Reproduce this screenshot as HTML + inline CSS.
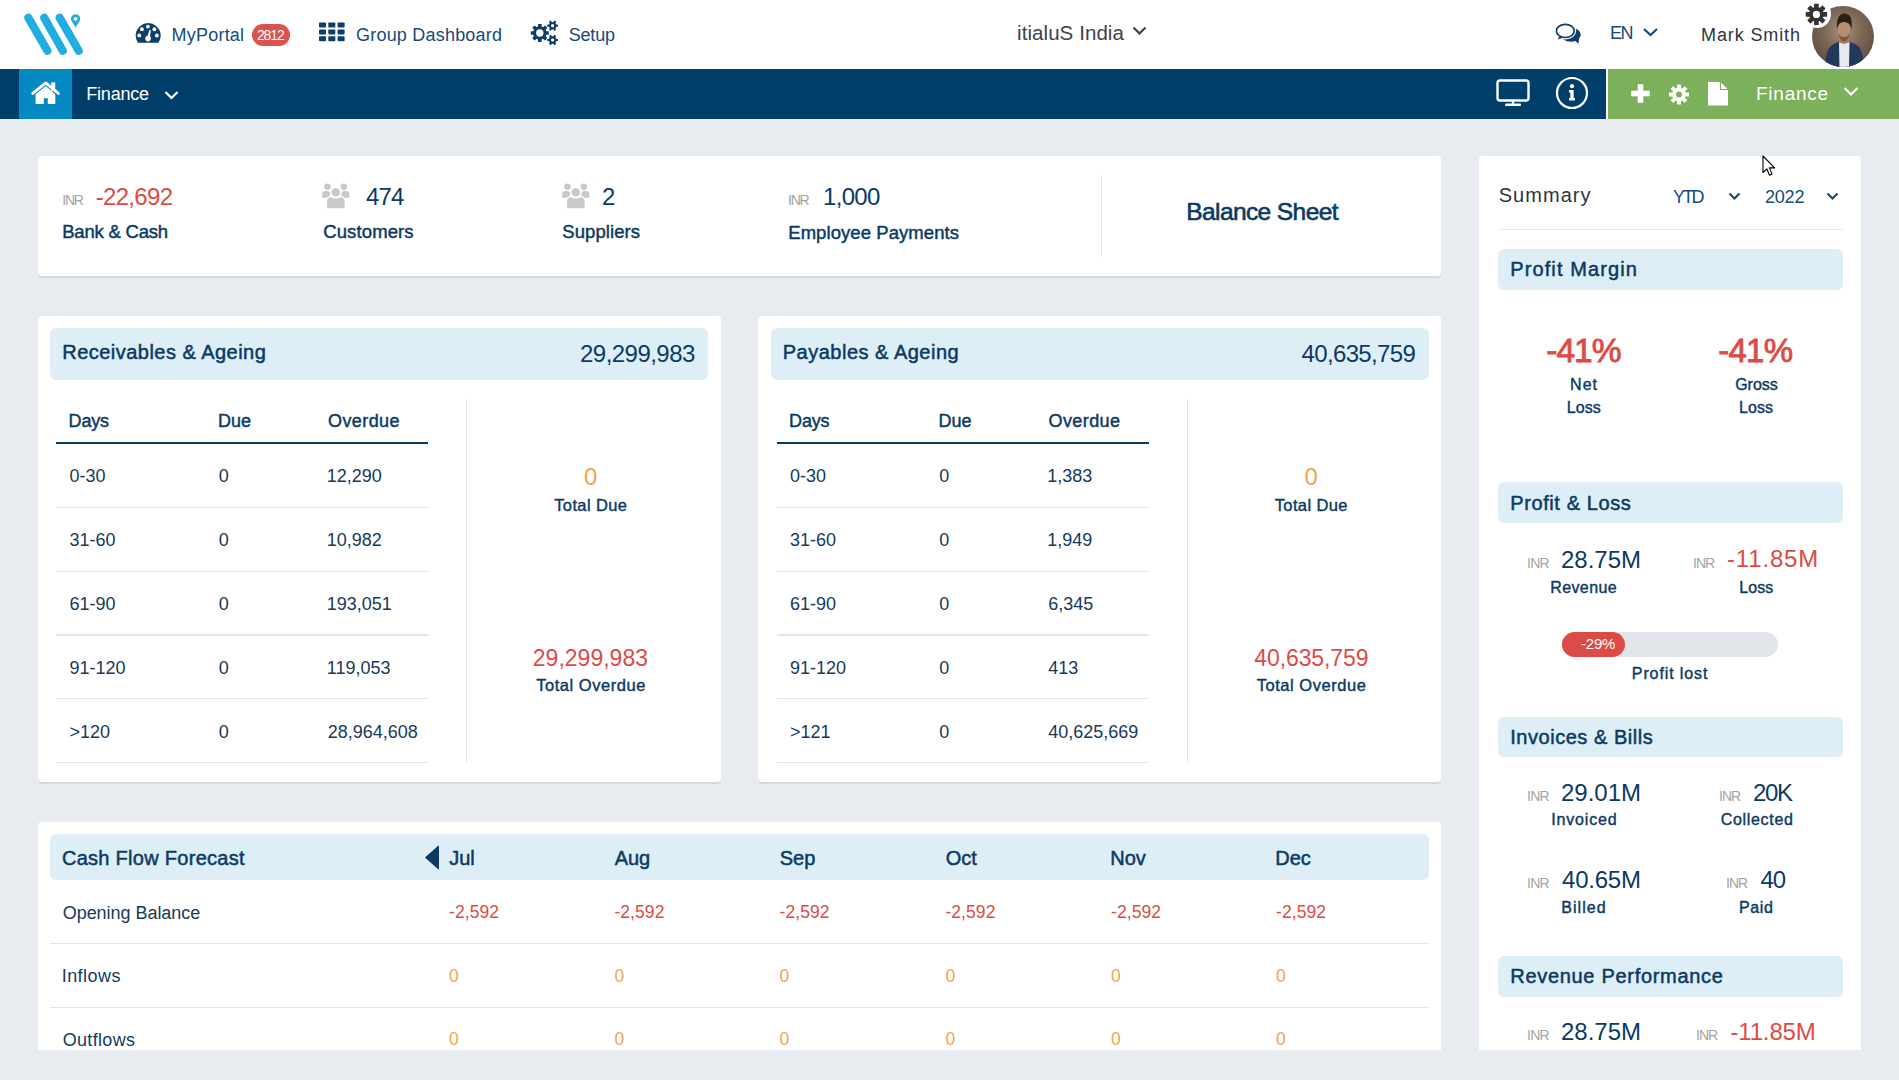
<!DOCTYPE html>
<html><head><meta charset="utf-8"><style>
html,body{margin:0;padding:0;width:1899px;height:1080px;overflow:hidden;background:#e8ebef;font-family:"Liberation Sans", sans-serif;}
.a{position:absolute;}
</style></head><body>
<!-- header -->
<div class="a" style="left:0;top:0;width:1899px;height:69px;background:#fff"></div>
<!-- logo -->
<svg class="a" style="left:20px;top:8px" width="70" height="50" viewBox="0 0 70 50">
  <g stroke="#22ade0" stroke-width="8.2" stroke-linecap="round">
    <line x1="8.4" y1="9.9" x2="27.4" y2="42.8"/>
    <line x1="24.3" y1="9.9" x2="42.8" y2="42.8"/>
    <line x1="39.7" y1="9.9" x2="58.7" y2="42.8"/>
  </g>
  <path d="M55.6 19.6 L51.56 13 A4.6 4.6 0 1 1 59.64 13 Z" fill="#22ade0"/>
  <circle cx="55.6" cy="10.8" r="1.9" fill="#fff"/>
</svg>
<!-- gauge icon -->
<svg class="a" style="left:135px;top:22px" width="27" height="22" viewBox="0 0 27 22">
  <path d="M2.9 20.7 A12.5 12.5 0 1 1 23.5 20.7 Z" fill="#0e3f6a"/>
  <g fill="#fff">
    <circle cx="12.9" cy="4.6" r="1.9"/><circle cx="6.9" cy="7.25" r="1.9"/><circle cx="19.4" cy="7.25" r="1.9"/>
    <circle cx="4.2" cy="13.5" r="1.9"/><circle cx="21.9" cy="13.5" r="1.9"/>
    <circle cx="13.05" cy="16.6" r="2.8"/>
    <path d="M11.8 16.3 L14.4 7.9 L15.9 8.2 L14.6 16.8 Z"/>
  </g>
</svg>
<!-- badge -->
<div class="a" style="left:252px;top:24px;width:38px;height:22px;border-radius:11px;background:#d9534f"></div>
<!-- grid icon -->
<svg class="a" style="left:319px;top:22px" width="26" height="20" viewBox="0 0 26 20">
  <g fill="#0e3f6a">
    <rect x="0" y="0.5" width="7" height="5" rx="0.8"/><rect x="9.3" y="0.5" width="7" height="5" rx="0.8"/><rect x="18.6" y="0.5" width="7" height="5" rx="0.8"/>
    <rect x="0" y="7.4" width="7" height="5" rx="0.8"/><rect x="9.3" y="7.4" width="7" height="5" rx="0.8"/><rect x="18.6" y="7.4" width="7" height="5" rx="0.8"/>
    <rect x="0" y="14.3" width="7" height="5" rx="0.8"/><rect x="9.3" y="14.3" width="7" height="5" rx="0.8"/><rect x="18.6" y="14.3" width="7" height="5" rx="0.8"/>
  </g>
</svg>
<!-- cogs icon -->
<svg class="a" style="left:530px;top:20px" width="28" height="28" viewBox="0 0 28 28">
  <g fill="#0e3f6a">
    <g transform="translate(9.8 13)">
      <circle r="6.8"/>
      <rect x="-1.8" y="-9" width="3.6" height="18" rx="0.5"/>
      <rect x="-1.8" y="-9" width="3.6" height="18" rx="0.5" transform="rotate(45)"/>
      <rect x="-1.8" y="-9" width="3.6" height="18" rx="0.5" transform="rotate(90)"/>
      <rect x="-1.8" y="-9" width="3.6" height="18" rx="0.5" transform="rotate(135)"/>
    </g>
    <g transform="translate(22.6 5.7)">
      <circle r="3.7"/>
      <rect x="-1.1" y="-5.4" width="2.2" height="10.8" rx="0.4" transform="rotate(90)"/>
      <rect x="-1.1" y="-5.4" width="2.2" height="10.8" rx="0.4" transform="rotate(30)"/>
      <rect x="-1.1" y="-5.4" width="2.2" height="10.8" rx="0.4" transform="rotate(150)"/>
    </g>
    <g transform="translate(22.6 20)">
      <circle r="3.7"/>
      <rect x="-1.1" y="-5.4" width="2.2" height="10.8" rx="0.4" transform="rotate(90)"/>
      <rect x="-1.1" y="-5.4" width="2.2" height="10.8" rx="0.4" transform="rotate(30)"/>
      <rect x="-1.1" y="-5.4" width="2.2" height="10.8" rx="0.4" transform="rotate(150)"/>
    </g>
  </g>
  <circle cx="9.8" cy="13" r="3.7" fill="#fff"/>
  <circle cx="22.6" cy="5.7" r="1.6" fill="#fff"/>
  <circle cx="22.6" cy="20" r="1.6" fill="#fff"/>
</svg>
<!-- company chevron -->
<svg class="a" style="left:1131px;top:25px" width="17" height="12" viewBox="0 0 17 12"><path d="M2.5 2.5 L8.5 8.5 L14.5 2.5" fill="none" stroke="#3d4348" stroke-width="2.2"/></svg>
<!-- chat icon -->
<svg class="a" style="left:1548px;top:16px" width="42" height="34" viewBox="0 0 42 34">
  <ellipse cx="22.8" cy="18.8" rx="10" ry="7" fill="#0e3f6a"/>
  <path d="M25 23 L31 22 L30.6 27.8 Z" fill="#0e3f6a"/>
  <ellipse cx="17.3" cy="14.9" rx="10.9" ry="8.5" fill="#fff"/>
  <path d="M12 19.5 L16 21.5 L9.6 23.6 Z" fill="#0e3f6a"/>
  <ellipse cx="17.3" cy="14.9" rx="8.9" ry="6.6" fill="#fff" stroke="#0e3f6a" stroke-width="1.7"/>
</svg>
<!-- EN chevron -->
<svg class="a" style="left:1641px;top:26px" width="19" height="12" viewBox="0 0 19 12"><path d="M3 3 L9.5 9 L16 3" fill="none" stroke="#164b78" stroke-width="2.2"/></svg>
<!-- avatar -->
<div class="a" style="left:1812px;top:6px;width:62px;height:61px;border-radius:50%;overflow:hidden;background:radial-gradient(circle at 50% 40%, #a89380 0%, #7d6856 40%, #4d3d31 100%)">
  <svg width="62" height="62" viewBox="0 0 62 62">
    <path d="M13 62 C13.5 50 15 42 21 38.5 L27 35.5 L37 35.5 L44 38.5 C50 42 51 50 52 62 Z" fill="#213a5c"/>
    <path d="M27 36 L37.5 36 L37 62 L27.5 62 Z" fill="#e6e9ee"/>
    <path d="M27.5 29 L36.5 29 L37 36.5 L32 38 L27 36.5 Z" fill="#a87c62"/>
    <ellipse cx="32" cy="24" rx="6.2" ry="8.2" fill="#b98d70"/>
    <path d="M25 24 C24 12 27.5 7.5 32.5 7.5 C38 7.5 41 12 39.5 24 C38.8 19 37.5 16.5 32 16 C27 16.5 25.8 19 25 24 Z" fill="#2b1f18"/>
    <path d="M26.5 27 C27.5 33 29.5 35.5 32 35.5 C34.5 35.5 36.5 33 37.5 27 C36 30 34.5 31 32 31 C29.5 31 28 30 26.5 27 Z" fill="#6b4a36" opacity="0.7"/>
  </svg>
</div>
<!-- avatar gear -->
<div class="a" style="left:1802.5px;top:0px;width:28px;height:28px;border-radius:50%;background:#fff"></div>
<svg class="a" style="left:1805px;top:2.5px" width="23" height="23" viewBox="0 0 23 23">
  <g fill="#333" transform="translate(11.4 11.4)">
    <circle r="7.3"/>
    <rect x="-2.3" y="-10.7" width="4.6" height="21.4" rx="0.6"/>
    <rect x="-2.3" y="-10.7" width="4.6" height="21.4" rx="0.6" transform="rotate(45)"/>
    <rect x="-2.3" y="-10.7" width="4.6" height="21.4" rx="0.6" transform="rotate(90)"/>
    <rect x="-2.3" y="-10.7" width="4.6" height="21.4" rx="0.6" transform="rotate(135)"/>
  </g>
  <circle cx="11.4" cy="11.4" r="3.6" fill="#fff"/>
</svg>

<!-- nav bar -->
<div class="a" style="left:0;top:69px;width:1899px;height:50px;background:#013f6b"></div>
<div class="a" style="left:19px;top:69px;width:53px;height:50px;background:#0589c3"></div>
<svg class="a" style="left:31px;top:81px" width="29" height="24" viewBox="0 0 29 24">
  <path d="M1.8 12.4 L14.7 1.9 L27.4 12.4" fill="none" stroke="#fff" stroke-width="2.9" stroke-linecap="round" stroke-linejoin="round"/>
  <rect x="20.3" y="1.4" width="3.9" height="8.5" fill="#fff"/>
  <path d="M4.6 13.3 L14.7 5 L24.3 13.3 L24.3 23 L16.8 23 L16.8 17.2 L12.8 17.2 L12.8 23 L4.6 23 Z" fill="#fff"/>
</svg>
<svg class="a" style="left:163px;top:89px" width="17" height="12" viewBox="0 0 17 12"><path d="M2.5 3 L8.5 9 L14.5 3" fill="none" stroke="#fff" stroke-width="2.2"/></svg>
<!-- monitor -->
<svg class="a" style="left:1496px;top:79px" width="35" height="28" viewBox="0 0 35 28">
  <rect x="1.5" y="1.5" width="31" height="20" rx="2.5" fill="none" stroke="#fff" stroke-width="2.4"/>
  <rect x="15.8" y="21.5" width="2.4" height="3.5" fill="#fff"/>
  <rect x="9" y="24.6" width="16" height="2.4" rx="1" fill="#fff"/>
</svg>
<!-- info -->
<svg class="a" style="left:1555px;top:76px" width="34" height="34" viewBox="0 0 34 34">
  <circle cx="17" cy="17" r="15" fill="none" stroke="#fff" stroke-width="2.2"/>
  <circle cx="17" cy="10.2" r="2.1" fill="#fff"/>
  <path d="M14 14 L18.7 14 L18.7 22 L20 22 L20 24.5 L14 24.5 L14 22 L15.3 22 L15.3 16.5 L14 16.5 Z" fill="#fff"/>
</svg>
<!-- green section -->
<div class="a" style="left:1606px;top:69px;width:2px;height:50px;background:#fff"></div>
<div class="a" style="left:1608px;top:69px;width:291px;height:50px;background:#7db05a"></div>
<svg class="a" style="left:1630px;top:83px" width="21" height="21" viewBox="0 0 21 21">
  <path d="M8 1.5 H13 V8 H19.5 V13 H13 V19.5 H8 V13 H1.5 V8 H8 Z" fill="#fff" stroke="#fff" stroke-width="0.6" stroke-linejoin="round"/>
</svg>
<svg class="a" style="left:1668px;top:84px" width="22" height="21" viewBox="0 0 22 21">
  <g fill="#fff" transform="translate(11 10.5)">
    <circle r="6.8"/>
    <rect x="-2" y="-10" width="4" height="20" rx="0.6"/>
    <rect x="-2" y="-10" width="4" height="20" rx="0.6" transform="rotate(45)"/>
    <rect x="-2" y="-10" width="4" height="20" rx="0.6" transform="rotate(90)"/>
    <rect x="-2" y="-10" width="4" height="20" rx="0.6" transform="rotate(135)"/>
  </g>
  <circle cx="11" cy="10.5" r="3" fill="#7db05a"/>
</svg>
<svg class="a" style="left:1707px;top:81px" width="22" height="25" viewBox="0 0 22 25">
  <path d="M1 1 H13.5 L21 8.5 V24.5 H1 Z" fill="#fff"/>
  <path d="M13.5 1 V8.5 H21" fill="none" stroke="#7db05a" stroke-width="1.2"/>
</svg>
<svg class="a" style="left:1842px;top:85px" width="18" height="13" viewBox="0 0 18 13"><path d="M2.5 3 L9 9.5 L15.5 3" fill="none" stroke="#fff" stroke-width="2.2"/></svg>

<!-- KPI card -->
<div class="a" style="left:38px;top:156px;width:1403px;height:120px;background:#fff;border-radius:4px;box-shadow:0 2px 0 #d8d9db"></div>
<div class="a" style="left:1101px;top:175px;width:1px;height:82px;background:#e2e5e8"></div>
<svg class="a" style="left:321px;top:182px" width="29" height="28" viewBox="0 0 29 28">
  <g>
    <circle cx="6.5" cy="4.7" r="3.3" fill="#c9c9c9"/><circle cx="22.8" cy="4.7" r="3.3" fill="#c9c9c9"/>
    <path d="M1.2 15.7 L1.2 12 C1.2 10 2.5 9 4.5 9 L6 9 C8 9 9 10 9 12 L9 15.7 Z" fill="#c9c9c9"/>
    <path d="M20.4 15.7 L20.4 12 C20.4 10 21.5 9 23.5 9 L25 9 C27 9 28.4 10 28.4 12 L28.4 15.7 Z" fill="#c9c9c9"/>
    <path d="M5.3 26.8 L5.3 20.5 C5.3 16.2 7.3 14.6 10 14.4 C12.5 16.4 17.2 16.4 19.6 14.4 C22.3 14.6 24.3 16.2 24.3 20.5 L24.3 26.8 Z" fill="#c9c9c9" stroke="#fff" stroke-width="1.3"/>
    <circle cx="14.8" cy="10.3" r="4.9" fill="#c9c9c9" stroke="#fff" stroke-width="1.2"/>
  </g>
</svg>
<svg class="a" style="left:561px;top:182px" width="29" height="28" viewBox="0 0 29 28">
  <g>
    <circle cx="6.5" cy="4.7" r="3.3" fill="#c9c9c9"/><circle cx="22.8" cy="4.7" r="3.3" fill="#c9c9c9"/>
    <path d="M1.2 15.7 L1.2 12 C1.2 10 2.5 9 4.5 9 L6 9 C8 9 9 10 9 12 L9 15.7 Z" fill="#c9c9c9"/>
    <path d="M20.4 15.7 L20.4 12 C20.4 10 21.5 9 23.5 9 L25 9 C27 9 28.4 10 28.4 12 L28.4 15.7 Z" fill="#c9c9c9"/>
    <path d="M5.3 26.8 L5.3 20.5 C5.3 16.2 7.3 14.6 10 14.4 C12.5 16.4 17.2 16.4 19.6 14.4 C22.3 14.6 24.3 16.2 24.3 20.5 L24.3 26.8 Z" fill="#c9c9c9" stroke="#fff" stroke-width="1.3"/>
    <circle cx="14.8" cy="10.3" r="4.9" fill="#c9c9c9" stroke="#fff" stroke-width="1.2"/>
  </g>
</svg>

<!-- Receivables card -->
<div class="a" style="left:38px;top:316px;width:683px;height:466px;background:#fff;border-radius:4px;box-shadow:0 2px 0 #d8d9db"></div>
<div class="a" style="left:50px;top:328px;width:658px;height:52px;background:#deeef7;border-radius:6px"></div>
<div class="a" style="left:56px;top:442px;width:372px;height:2px;background:#0b3a63"></div>
<div class="a" style="left:56px;top:507px;width:372px;height:1px;background:#e3e6e9"></div>
<div class="a" style="left:56px;top:571px;width:372px;height:1px;background:#e3e6e9"></div>
<div class="a" style="left:56px;top:634px;width:372px;height:2px;background:#e3e6e9"></div>
<div class="a" style="left:56px;top:698px;width:372px;height:1px;background:#e3e6e9"></div>
<div class="a" style="left:56px;top:762px;width:372px;height:1px;background:#e3e6e9"></div>
<div class="a" style="left:466px;top:399px;width:1px;height:363px;background:#e3e6e9"></div>

<!-- Payables card -->
<div class="a" style="left:758px;top:316px;width:683px;height:466px;background:#fff;border-radius:4px;box-shadow:0 2px 0 #d8d9db"></div>
<div class="a" style="left:771px;top:328px;width:658px;height:52px;background:#deeef7;border-radius:6px"></div>
<div class="a" style="left:777px;top:442px;width:372px;height:2px;background:#0b3a63"></div>
<div class="a" style="left:777px;top:507px;width:372px;height:1px;background:#e3e6e9"></div>
<div class="a" style="left:777px;top:571px;width:372px;height:1px;background:#e3e6e9"></div>
<div class="a" style="left:777px;top:634px;width:372px;height:2px;background:#e3e6e9"></div>
<div class="a" style="left:777px;top:698px;width:372px;height:1px;background:#e3e6e9"></div>
<div class="a" style="left:777px;top:762px;width:372px;height:1px;background:#e3e6e9"></div>
<div class="a" style="left:1187px;top:399px;width:1px;height:363px;background:#e3e6e9"></div>

<!-- Cash flow card -->
<div class="a" style="left:38px;top:822px;width:1403px;height:228px;background:#fff;border-radius:4px 4px 0 0"></div>
<div class="a" style="left:50px;top:834px;width:1379px;height:46px;background:#deeef7;border-radius:6px"></div>
<svg class="a" style="left:424px;top:845px" width="16" height="25" viewBox="0 0 16 25"><path d="M14.5 1 L14.5 24 L1.5 12.5 Z" fill="#0b3a63" stroke="#0b3a63" stroke-width="1" stroke-linejoin="round"/></svg>
<div class="a" style="left:50px;top:943px;width:1379px;height:1px;background:#e3e6e9"></div>
<div class="a" style="left:50px;top:1007px;width:1379px;height:1px;background:#e3e6e9"></div>

<!-- Summary card -->
<div class="a" style="left:1479px;top:156px;width:382px;height:894px;background:#fff;border-radius:4px 4px 0 0"></div>
<svg class="a" style="left:1726.5px;top:190px" width="15" height="12" viewBox="0 0 15 12"><path d="M2.5 3.5 L7.5 8.5 L12.5 3.5" fill="none" stroke="#164b78" stroke-width="2.2"/></svg>
<svg class="a" style="left:1824.5px;top:190px" width="15" height="12" viewBox="0 0 15 12"><path d="M2.5 3.5 L7.5 8.5 L12.5 3.5" fill="none" stroke="#164b78" stroke-width="2.2"/></svg>
<div class="a" style="left:1498px;top:229px;width:345px;height:1px;background:#e6e8ea"></div>
<div class="a" style="left:1498px;top:249px;width:345px;height:41px;background:#deeef7;border-radius:6px"></div>
<div class="a" style="left:1498px;top:482px;width:345px;height:41px;background:#deeef7;border-radius:6px"></div>
<div class="a" style="left:1498px;top:717px;width:345px;height:40px;background:#deeef7;border-radius:6px"></div>
<div class="a" style="left:1498px;top:956px;width:345px;height:41px;background:#deeef7;border-radius:6px"></div>
<div class="a" style="left:1562px;top:632px;width:216px;height:25px;background:#e1e5e9;border-radius:12.5px"></div>
<div class="a" style="left:1562px;top:632px;width:63px;height:25px;background:#dc4b46;border-radius:12.5px"></div>
<!-- cursor -->
<svg class="a" style="left:1762.3px;top:154.5px" width="14" height="22" viewBox="0 0 14 22">
  <path d="M1 1 L1 17.5 L4.8 13.8 L7.5 20.2 L10 19.1 L7.4 12.9 L12.6 12.9 Z" fill="#fff" stroke="#000" stroke-width="1.1" stroke-linejoin="round"/>
</svg>

<div style='position:absolute;top:25.76px;left:171.60px;font-size:18px;line-height:1;font-weight:normal;color:#164b78;white-space:nowrap;letter-spacing:0.212px;'>MyPortal</div>
<div style='position:absolute;top:27.55px;left:256.90px;font-size:14px;line-height:1;font-weight:normal;color:#fff;white-space:nowrap;letter-spacing:-1.119px;'>2812</div>
<div style='position:absolute;top:26.46px;left:356.00px;font-size:18px;line-height:1;font-weight:normal;color:#164b78;white-space:nowrap;letter-spacing:0.209px;'>Group Dashboard</div>
<div style='position:absolute;top:26.46px;left:568.70px;font-size:18px;line-height:1;font-weight:normal;color:#164b78;white-space:nowrap;letter-spacing:-0.182px;'>Setup</div>
<div style='position:absolute;top:22.65px;left:1017.00px;font-size:20.5px;line-height:1;font-weight:normal;color:#3d4348;white-space:nowrap;letter-spacing:0.076px;'>itialuS India</div>
<div style='position:absolute;top:23.76px;left:1610.00px;font-size:18px;line-height:1;font-weight:normal;color:#164b78;white-space:nowrap;letter-spacing:-1.506px;'>EN</div>
<div style='position:absolute;top:25.76px;left:1701.00px;font-size:18px;line-height:1;font-weight:normal;color:#2f3540;white-space:nowrap;letter-spacing:0.889px;'>Mark Smith</div>
<div style='position:absolute;top:84.56px;left:86.30px;font-size:18px;line-height:1;font-weight:normal;color:#fff;white-space:nowrap;letter-spacing:-0.221px;'>Finance</div>
<div style='position:absolute;top:83.62px;left:1756.00px;font-size:19px;line-height:1;font-weight:normal;color:#fff;white-space:nowrap;letter-spacing:0.745px;'>Finance</div>
<div style='position:absolute;top:193.15px;left:62.30px;font-size:14px;line-height:1;font-weight:normal;color:#a4a4a4;white-space:nowrap;letter-spacing:-1.250px;'>INR</div>
<div style='position:absolute;top:184.68px;left:95.70px;font-size:24px;line-height:1;font-weight:normal;color:#dc4b46;white-space:nowrap;letter-spacing:-0.675px;'>-22,692</div>
<div style='position:absolute;top:223.34px;left:62.23px;font-size:18.5px;line-height:1;font-weight:normal;color:#0b3a63;white-space:nowrap;letter-spacing:-0.215px;-webkit-text-stroke:0.463px #0b3a63;'>Bank &amp; Cash</div>
<div style='position:absolute;top:184.68px;left:366.00px;font-size:24px;line-height:1;font-weight:normal;color:#0b3a63;white-space:nowrap;letter-spacing:-0.848px;'>474</div>
<div style='position:absolute;top:223.34px;left:323.23px;font-size:18.5px;line-height:1;font-weight:normal;color:#0b3a63;white-space:nowrap;letter-spacing:0.119px;-webkit-text-stroke:0.463px #0b3a63;'>Customers</div>
<div style='position:absolute;top:184.68px;left:602.00px;font-size:24px;line-height:1;font-weight:normal;color:#0b3a63;white-space:nowrap;letter-spacing:0.000px;'>2</div>
<div style='position:absolute;top:223.34px;left:562.23px;font-size:18.5px;line-height:1;font-weight:normal;color:#0b3a63;white-space:nowrap;letter-spacing:0.083px;-webkit-text-stroke:0.463px #0b3a63;'>Suppliers</div>
<div style='position:absolute;top:193.15px;left:788.00px;font-size:14px;line-height:1;font-weight:normal;color:#a4a4a4;white-space:nowrap;letter-spacing:-1.250px;'>INR</div>
<div style='position:absolute;top:184.68px;left:823.00px;font-size:24px;line-height:1;font-weight:normal;color:#0b3a63;white-space:nowrap;letter-spacing:-0.678px;'>1,000</div>
<div style='position:absolute;top:224.34px;left:788.23px;font-size:18.5px;line-height:1;font-weight:normal;color:#0b3a63;white-space:nowrap;letter-spacing:0.070px;-webkit-text-stroke:0.463px #0b3a63;'>Employee Payments</div>
<div style='position:absolute;top:200.26px;left:1186.31px;font-size:24.5px;line-height:1;font-weight:normal;color:#0b3a63;white-space:nowrap;letter-spacing:-0.598px;-webkit-text-stroke:0.613px #0b3a63;'>Balance Sheet</div>
<div style='position:absolute;top:342.37px;left:62.25px;font-size:20px;line-height:1;font-weight:normal;color:#0b3a63;white-space:nowrap;letter-spacing:0.471px;-webkit-text-stroke:0.500px #0b3a63;'>Receivables &amp; Ageing</div>
<div style='position:absolute;top:341.68px;left:580.00px;font-size:24px;line-height:1;font-weight:normal;color:#0b3a63;white-space:nowrap;letter-spacing:-0.530px;'>29,299,983</div>
<div style='position:absolute;top:411.86px;left:68.62px;font-size:18px;line-height:1;font-weight:normal;color:#0b3a63;white-space:nowrap;letter-spacing:-0.220px;-webkit-text-stroke:0.450px #0b3a63;'>Days</div>
<div style='position:absolute;top:411.86px;left:217.92px;font-size:18px;line-height:1;font-weight:normal;color:#0b3a63;white-space:nowrap;letter-spacing:0.020px;-webkit-text-stroke:0.450px #0b3a63;'>Due</div>
<div style='position:absolute;top:411.86px;left:328.03px;font-size:18px;line-height:1;font-weight:normal;color:#0b3a63;white-space:nowrap;letter-spacing:0.404px;-webkit-text-stroke:0.450px #0b3a63;'>Overdue</div>
<div style='position:absolute;top:467.16px;left:69.40px;font-size:18px;line-height:1;font-weight:normal;color:#163a5c;white-space:nowrap;letter-spacing:0.000px;'>0-30</div>
<div style='position:absolute;top:467.16px;left:218.70px;font-size:18px;line-height:1;font-weight:normal;color:#163a5c;white-space:nowrap;letter-spacing:0.000px;'>0</div>
<div style='position:absolute;top:467.16px;left:326.80px;font-size:18px;line-height:1;font-weight:normal;color:#163a5c;white-space:nowrap;letter-spacing:0.000px;'>12,290</div>
<div style='position:absolute;top:530.96px;left:69.40px;font-size:18px;line-height:1;font-weight:normal;color:#163a5c;white-space:nowrap;letter-spacing:0.000px;'>31-60</div>
<div style='position:absolute;top:530.96px;left:218.70px;font-size:18px;line-height:1;font-weight:normal;color:#163a5c;white-space:nowrap;letter-spacing:0.000px;'>0</div>
<div style='position:absolute;top:530.96px;left:326.80px;font-size:18px;line-height:1;font-weight:normal;color:#163a5c;white-space:nowrap;letter-spacing:0.000px;'>10,982</div>
<div style='position:absolute;top:594.96px;left:69.40px;font-size:18px;line-height:1;font-weight:normal;color:#163a5c;white-space:nowrap;letter-spacing:0.000px;'>61-90</div>
<div style='position:absolute;top:594.96px;left:218.70px;font-size:18px;line-height:1;font-weight:normal;color:#163a5c;white-space:nowrap;letter-spacing:0.000px;'>0</div>
<div style='position:absolute;top:594.96px;left:326.80px;font-size:18px;line-height:1;font-weight:normal;color:#163a5c;white-space:nowrap;letter-spacing:0.000px;'>193,051</div>
<div style='position:absolute;top:658.76px;left:69.40px;font-size:18px;line-height:1;font-weight:normal;color:#163a5c;white-space:nowrap;letter-spacing:0.000px;'>91-120</div>
<div style='position:absolute;top:658.76px;left:218.70px;font-size:18px;line-height:1;font-weight:normal;color:#163a5c;white-space:nowrap;letter-spacing:0.000px;'>0</div>
<div style='position:absolute;top:658.76px;left:326.80px;font-size:18px;line-height:1;font-weight:normal;color:#163a5c;white-space:nowrap;letter-spacing:0.000px;'>119,053</div>
<div style='position:absolute;top:722.56px;left:69.40px;font-size:18px;line-height:1;font-weight:normal;color:#163a5c;white-space:nowrap;letter-spacing:0.000px;'>&gt;120</div>
<div style='position:absolute;top:722.56px;left:218.70px;font-size:18px;line-height:1;font-weight:normal;color:#163a5c;white-space:nowrap;letter-spacing:0.000px;'>0</div>
<div style='position:absolute;top:722.56px;left:327.80px;font-size:18px;line-height:1;font-weight:normal;color:#163a5c;white-space:nowrap;letter-spacing:0.000px;'>28,964,608</div>
<div style='position:absolute;top:464.78px;left:584.00px;font-size:24px;line-height:1;font-weight:normal;color:#eda64c;white-space:nowrap;letter-spacing:0.000px;'>0</div>
<div style='position:absolute;top:497.03px;left:554.21px;font-size:16.5px;line-height:1;font-weight:normal;color:#0b3a63;white-space:nowrap;letter-spacing:0.382px;-webkit-text-stroke:0.413px #0b3a63;'>Total Due</div>
<div style='position:absolute;top:646.53px;left:532.80px;font-size:23px;line-height:1;font-weight:normal;color:#dc4b46;white-space:nowrap;letter-spacing:0.009px;'>29,299,983</div>
<div style='position:absolute;top:676.83px;left:536.16px;font-size:16.5px;line-height:1;font-weight:normal;color:#0b3a63;white-space:nowrap;letter-spacing:0.545px;-webkit-text-stroke:0.413px #0b3a63;'>Total Overdue</div>
<div style='position:absolute;top:342.37px;left:782.75px;font-size:20px;line-height:1;font-weight:normal;color:#0b3a63;white-space:nowrap;letter-spacing:0.501px;-webkit-text-stroke:0.500px #0b3a63;'>Payables &amp; Ageing</div>
<div style='position:absolute;top:341.68px;left:1301.50px;font-size:24px;line-height:1;font-weight:normal;color:#0b3a63;white-space:nowrap;letter-spacing:-0.641px;'>40,635,759</div>
<div style='position:absolute;top:411.86px;left:789.12px;font-size:18px;line-height:1;font-weight:normal;color:#0b3a63;white-space:nowrap;letter-spacing:-0.220px;-webkit-text-stroke:0.450px #0b3a63;'>Days</div>
<div style='position:absolute;top:411.86px;left:938.43px;font-size:18px;line-height:1;font-weight:normal;color:#0b3a63;white-space:nowrap;letter-spacing:0.020px;-webkit-text-stroke:0.450px #0b3a63;'>Due</div>
<div style='position:absolute;top:411.86px;left:1048.52px;font-size:18px;line-height:1;font-weight:normal;color:#0b3a63;white-space:nowrap;letter-spacing:0.404px;-webkit-text-stroke:0.450px #0b3a63;'>Overdue</div>
<div style='position:absolute;top:467.16px;left:789.90px;font-size:18px;line-height:1;font-weight:normal;color:#163a5c;white-space:nowrap;letter-spacing:0.000px;'>0-30</div>
<div style='position:absolute;top:467.16px;left:939.20px;font-size:18px;line-height:1;font-weight:normal;color:#163a5c;white-space:nowrap;letter-spacing:0.000px;'>0</div>
<div style='position:absolute;top:467.16px;left:1047.30px;font-size:18px;line-height:1;font-weight:normal;color:#163a5c;white-space:nowrap;letter-spacing:0.000px;'>1,383</div>
<div style='position:absolute;top:530.96px;left:789.90px;font-size:18px;line-height:1;font-weight:normal;color:#163a5c;white-space:nowrap;letter-spacing:0.000px;'>31-60</div>
<div style='position:absolute;top:530.96px;left:939.20px;font-size:18px;line-height:1;font-weight:normal;color:#163a5c;white-space:nowrap;letter-spacing:0.000px;'>0</div>
<div style='position:absolute;top:530.96px;left:1047.30px;font-size:18px;line-height:1;font-weight:normal;color:#163a5c;white-space:nowrap;letter-spacing:0.000px;'>1,949</div>
<div style='position:absolute;top:594.96px;left:789.90px;font-size:18px;line-height:1;font-weight:normal;color:#163a5c;white-space:nowrap;letter-spacing:0.000px;'>61-90</div>
<div style='position:absolute;top:594.96px;left:939.20px;font-size:18px;line-height:1;font-weight:normal;color:#163a5c;white-space:nowrap;letter-spacing:0.000px;'>0</div>
<div style='position:absolute;top:594.96px;left:1048.30px;font-size:18px;line-height:1;font-weight:normal;color:#163a5c;white-space:nowrap;letter-spacing:0.000px;'>6,345</div>
<div style='position:absolute;top:658.76px;left:789.90px;font-size:18px;line-height:1;font-weight:normal;color:#163a5c;white-space:nowrap;letter-spacing:0.000px;'>91-120</div>
<div style='position:absolute;top:658.76px;left:939.20px;font-size:18px;line-height:1;font-weight:normal;color:#163a5c;white-space:nowrap;letter-spacing:0.000px;'>0</div>
<div style='position:absolute;top:658.76px;left:1048.30px;font-size:18px;line-height:1;font-weight:normal;color:#163a5c;white-space:nowrap;letter-spacing:0.000px;'>413</div>
<div style='position:absolute;top:722.56px;left:789.90px;font-size:18px;line-height:1;font-weight:normal;color:#163a5c;white-space:nowrap;letter-spacing:0.000px;'>&gt;121</div>
<div style='position:absolute;top:722.56px;left:939.20px;font-size:18px;line-height:1;font-weight:normal;color:#163a5c;white-space:nowrap;letter-spacing:0.000px;'>0</div>
<div style='position:absolute;top:722.56px;left:1048.30px;font-size:18px;line-height:1;font-weight:normal;color:#163a5c;white-space:nowrap;letter-spacing:0.000px;'>40,625,669</div>
<div style='position:absolute;top:464.78px;left:1304.50px;font-size:24px;line-height:1;font-weight:normal;color:#eda64c;white-space:nowrap;letter-spacing:0.000px;'>0</div>
<div style='position:absolute;top:497.03px;left:1274.71px;font-size:16.5px;line-height:1;font-weight:normal;color:#0b3a63;white-space:nowrap;letter-spacing:0.382px;-webkit-text-stroke:0.413px #0b3a63;'>Total Due</div>
<div style='position:absolute;top:646.53px;left:1254.30px;font-size:23px;line-height:1;font-weight:normal;color:#dc4b46;white-space:nowrap;letter-spacing:-0.102px;'>40,635,759</div>
<div style='position:absolute;top:676.83px;left:1256.66px;font-size:16.5px;line-height:1;font-weight:normal;color:#0b3a63;white-space:nowrap;letter-spacing:0.545px;-webkit-text-stroke:0.413px #0b3a63;'>Total Overdue</div>
<div style='position:absolute;top:848.47px;left:61.95px;font-size:20px;line-height:1;font-weight:normal;color:#0b3a63;white-space:nowrap;letter-spacing:0.284px;-webkit-text-stroke:0.500px #0b3a63;'>Cash Flow Forecast</div>
<div style='position:absolute;top:848.47px;left:449.25px;font-size:20px;line-height:1;font-weight:normal;color:#0b3a63;white-space:nowrap;letter-spacing:0.000px;-webkit-text-stroke:0.500px #0b3a63;'>Jul</div>
<div style='position:absolute;top:904.19px;left:449.00px;font-size:17.5px;line-height:1;font-weight:normal;color:#dc4b46;white-space:nowrap;letter-spacing:0.082px;'>-2,592</div>
<div style='position:absolute;top:967.79px;left:449.00px;font-size:17.5px;line-height:1;font-weight:normal;color:#eda64c;white-space:nowrap;letter-spacing:0.000px;'>0</div>
<div style='position:absolute;top:1031.19px;left:449.00px;font-size:17.5px;line-height:1;font-weight:normal;color:#eda64c;white-space:nowrap;letter-spacing:0.000px;'>0</div>
<div style='position:absolute;top:848.47px;left:614.65px;font-size:20px;line-height:1;font-weight:normal;color:#0b3a63;white-space:nowrap;letter-spacing:0.000px;-webkit-text-stroke:0.500px #0b3a63;'>Aug</div>
<div style='position:absolute;top:904.19px;left:614.40px;font-size:17.5px;line-height:1;font-weight:normal;color:#dc4b46;white-space:nowrap;letter-spacing:0.082px;'>-2,592</div>
<div style='position:absolute;top:967.79px;left:614.40px;font-size:17.5px;line-height:1;font-weight:normal;color:#eda64c;white-space:nowrap;letter-spacing:0.000px;'>0</div>
<div style='position:absolute;top:1031.19px;left:614.40px;font-size:17.5px;line-height:1;font-weight:normal;color:#eda64c;white-space:nowrap;letter-spacing:0.000px;'>0</div>
<div style='position:absolute;top:848.47px;left:779.75px;font-size:20px;line-height:1;font-weight:normal;color:#0b3a63;white-space:nowrap;letter-spacing:0.000px;-webkit-text-stroke:0.500px #0b3a63;'>Sep</div>
<div style='position:absolute;top:904.19px;left:779.50px;font-size:17.5px;line-height:1;font-weight:normal;color:#dc4b46;white-space:nowrap;letter-spacing:0.082px;'>-2,592</div>
<div style='position:absolute;top:967.79px;left:779.50px;font-size:17.5px;line-height:1;font-weight:normal;color:#eda64c;white-space:nowrap;letter-spacing:0.000px;'>0</div>
<div style='position:absolute;top:1031.19px;left:779.50px;font-size:17.5px;line-height:1;font-weight:normal;color:#eda64c;white-space:nowrap;letter-spacing:0.000px;'>0</div>
<div style='position:absolute;top:848.47px;left:945.65px;font-size:20px;line-height:1;font-weight:normal;color:#0b3a63;white-space:nowrap;letter-spacing:0.000px;-webkit-text-stroke:0.500px #0b3a63;'>Oct</div>
<div style='position:absolute;top:904.19px;left:945.40px;font-size:17.5px;line-height:1;font-weight:normal;color:#dc4b46;white-space:nowrap;letter-spacing:0.082px;'>-2,592</div>
<div style='position:absolute;top:967.79px;left:945.40px;font-size:17.5px;line-height:1;font-weight:normal;color:#eda64c;white-space:nowrap;letter-spacing:0.000px;'>0</div>
<div style='position:absolute;top:1031.19px;left:945.40px;font-size:17.5px;line-height:1;font-weight:normal;color:#eda64c;white-space:nowrap;letter-spacing:0.000px;'>0</div>
<div style='position:absolute;top:848.47px;left:1110.25px;font-size:20px;line-height:1;font-weight:normal;color:#0b3a63;white-space:nowrap;letter-spacing:0.000px;-webkit-text-stroke:0.500px #0b3a63;'>Nov</div>
<div style='position:absolute;top:904.19px;left:1111.00px;font-size:17.5px;line-height:1;font-weight:normal;color:#dc4b46;white-space:nowrap;letter-spacing:0.082px;'>-2,592</div>
<div style='position:absolute;top:967.79px;left:1111.00px;font-size:17.5px;line-height:1;font-weight:normal;color:#eda64c;white-space:nowrap;letter-spacing:0.000px;'>0</div>
<div style='position:absolute;top:1031.19px;left:1111.00px;font-size:17.5px;line-height:1;font-weight:normal;color:#eda64c;white-space:nowrap;letter-spacing:0.000px;'>0</div>
<div style='position:absolute;top:848.47px;left:1275.25px;font-size:20px;line-height:1;font-weight:normal;color:#0b3a63;white-space:nowrap;letter-spacing:0.000px;-webkit-text-stroke:0.500px #0b3a63;'>Dec</div>
<div style='position:absolute;top:904.19px;left:1276.00px;font-size:17.5px;line-height:1;font-weight:normal;color:#dc4b46;white-space:nowrap;letter-spacing:0.082px;'>-2,592</div>
<div style='position:absolute;top:967.79px;left:1276.00px;font-size:17.5px;line-height:1;font-weight:normal;color:#eda64c;white-space:nowrap;letter-spacing:0.000px;'>0</div>
<div style='position:absolute;top:1031.19px;left:1276.00px;font-size:17.5px;line-height:1;font-weight:normal;color:#eda64c;white-space:nowrap;letter-spacing:0.000px;'>0</div>
<div style='position:absolute;top:903.76px;left:62.70px;font-size:18px;line-height:1;font-weight:normal;color:#163a5c;white-space:nowrap;letter-spacing:-0.035px;'>Opening Balance</div>
<div style='position:absolute;top:967.36px;left:61.70px;font-size:18px;line-height:1;font-weight:normal;color:#163a5c;white-space:nowrap;letter-spacing:0.446px;'>Inflows</div>
<div style='position:absolute;top:1030.76px;left:62.70px;font-size:18px;line-height:1;font-weight:normal;color:#163a5c;white-space:nowrap;letter-spacing:0.325px;'>Outflows</div>
<div style='position:absolute;top:185.07px;left:1498.70px;font-size:20px;line-height:1;font-weight:normal;color:#2f3540;white-space:nowrap;letter-spacing:1.039px;'>Summary</div>
<div style='position:absolute;top:187.76px;left:1673.00px;font-size:18px;line-height:1;font-weight:normal;color:#164b78;white-space:nowrap;letter-spacing:-2.250px;'>YTD</div>
<div style='position:absolute;top:187.76px;left:1765.00px;font-size:18px;line-height:1;font-weight:normal;color:#164b78;white-space:nowrap;letter-spacing:-0.211px;'>2022</div>
<div style='position:absolute;top:259.37px;left:1510.25px;font-size:20px;line-height:1;font-weight:normal;color:#0b3a63;white-space:nowrap;letter-spacing:1.104px;-webkit-text-stroke:0.500px #0b3a63;'>Profit Margin</div>
<div style='position:absolute;top:333.74px;left:1546.27px;font-size:33.5px;line-height:1;font-weight:normal;color:#dc4b46;white-space:nowrap;letter-spacing:-0.985px;-webkit-text-stroke:0.838px #dc4b46;'>-41%</div>
<div style='position:absolute;top:377.26px;left:1570.00px;font-size:16px;line-height:1;font-weight:normal;color:#0b3a63;white-space:nowrap;letter-spacing:1.073px;-webkit-text-stroke:0.400px #0b3a63;'>Net</div>
<div style='position:absolute;top:400.21px;left:1566.65px;font-size:16px;line-height:1;font-weight:normal;color:#0b3a63;white-space:nowrap;letter-spacing:0.101px;-webkit-text-stroke:0.400px #0b3a63;'>Loss</div>
<div style='position:absolute;top:334.07px;left:1718.26px;font-size:33px;line-height:1;font-weight:normal;color:#dc4b46;white-space:nowrap;letter-spacing:-0.740px;-webkit-text-stroke:0.825px #dc4b46;'>-41%</div>
<div style='position:absolute;top:377.46px;left:1735.20px;font-size:16px;line-height:1;font-weight:normal;color:#0b3a63;white-space:nowrap;letter-spacing:-0.018px;-webkit-text-stroke:0.400px #0b3a63;'>Gross</div>
<div style='position:absolute;top:400.46px;left:1738.95px;font-size:16px;line-height:1;font-weight:normal;color:#0b3a63;white-space:nowrap;letter-spacing:0.101px;-webkit-text-stroke:0.400px #0b3a63;'>Loss</div>
<div style='position:absolute;top:492.77px;left:1510.25px;font-size:20px;line-height:1;font-weight:normal;color:#0b3a63;white-space:nowrap;letter-spacing:0.593px;-webkit-text-stroke:0.500px #0b3a63;'>Profit &amp; Loss</div>
<div style='position:absolute;top:556.15px;left:1527.00px;font-size:14px;line-height:1;font-weight:normal;color:#a4a4a4;white-space:nowrap;letter-spacing:-0.750px;'>INR</div>
<div style='position:absolute;top:547.68px;left:1561.00px;font-size:24px;line-height:1;font-weight:normal;color:#0b3a63;white-space:nowrap;letter-spacing:-0.012px;'>28.75M</div>
<div style='position:absolute;top:579.86px;left:1550.20px;font-size:16px;line-height:1;font-weight:normal;color:#0b3a63;white-space:nowrap;letter-spacing:0.409px;-webkit-text-stroke:0.400px #0b3a63;'>Revenue</div>
<div style='position:absolute;top:556.15px;left:1693.00px;font-size:14px;line-height:1;font-weight:normal;color:#a4a4a4;white-space:nowrap;letter-spacing:-1.000px;'>INR</div>
<div style='position:absolute;top:547.48px;left:1727.00px;font-size:24px;line-height:1;font-weight:normal;color:#dc4b46;white-space:nowrap;letter-spacing:0.838px;'>-11.85M</div>
<div style='position:absolute;top:580.46px;left:1739.15px;font-size:16px;line-height:1;font-weight:normal;color:#0b3a63;white-space:nowrap;letter-spacing:0.101px;-webkit-text-stroke:0.400px #0b3a63;'>Loss</div>
<div style='position:absolute;top:636.30px;left:1581.00px;font-size:15px;line-height:1;font-weight:normal;color:#fff;white-space:nowrap;letter-spacing:-0.227px;'>-29%</div>
<div style='position:absolute;top:666.46px;left:1631.85px;font-size:16px;line-height:1;font-weight:normal;color:#0b3a63;white-space:nowrap;letter-spacing:0.886px;-webkit-text-stroke:0.400px #0b3a63;'>Profit lost</div>
<div style='position:absolute;top:727.37px;left:1510.25px;font-size:20px;line-height:1;font-weight:normal;color:#0b3a63;white-space:nowrap;letter-spacing:0.534px;-webkit-text-stroke:0.500px #0b3a63;'>Invoices &amp; Bills</div>
<div style='position:absolute;top:789.15px;left:1527.00px;font-size:14px;line-height:1;font-weight:normal;color:#a4a4a4;white-space:nowrap;letter-spacing:-0.750px;'>INR</div>
<div style='position:absolute;top:780.68px;left:1561.00px;font-size:24px;line-height:1;font-weight:normal;color:#0b3a63;white-space:nowrap;letter-spacing:-0.012px;'>29.01M</div>
<div style='position:absolute;top:812.26px;left:1551.20px;font-size:16px;line-height:1;font-weight:normal;color:#0b3a63;white-space:nowrap;letter-spacing:0.844px;-webkit-text-stroke:0.400px #0b3a63;'>Invoiced</div>
<div style='position:absolute;top:789.15px;left:1719.00px;font-size:14px;line-height:1;font-weight:normal;color:#a4a4a4;white-space:nowrap;letter-spacing:-1.000px;'>INR</div>
<div style='position:absolute;top:780.68px;left:1753.00px;font-size:24px;line-height:1;font-weight:normal;color:#0b3a63;white-space:nowrap;letter-spacing:-1.348px;'>20K</div>
<div style='position:absolute;top:812.26px;left:1720.85px;font-size:16px;line-height:1;font-weight:normal;color:#0b3a63;white-space:nowrap;letter-spacing:0.662px;-webkit-text-stroke:0.400px #0b3a63;'>Collected</div>
<div style='position:absolute;top:876.15px;left:1527.00px;font-size:14px;line-height:1;font-weight:normal;color:#a4a4a4;white-space:nowrap;letter-spacing:-0.750px;'>INR</div>
<div style='position:absolute;top:867.68px;left:1562.00px;font-size:24px;line-height:1;font-weight:normal;color:#0b3a63;white-space:nowrap;letter-spacing:-0.212px;'>40.65M</div>
<div style='position:absolute;top:899.86px;left:1561.20px;font-size:16px;line-height:1;font-weight:normal;color:#0b3a63;white-space:nowrap;letter-spacing:1.073px;-webkit-text-stroke:0.400px #0b3a63;'>Billed</div>
<div style='position:absolute;top:876.15px;left:1726.00px;font-size:14px;line-height:1;font-weight:normal;color:#a4a4a4;white-space:nowrap;letter-spacing:-1.000px;'>INR</div>
<div style='position:absolute;top:867.68px;left:1760.60px;font-size:24px;line-height:1;font-weight:normal;color:#0b3a63;white-space:nowrap;letter-spacing:-1.148px;'>40</div>
<div style='position:absolute;top:899.86px;left:1738.95px;font-size:16px;line-height:1;font-weight:normal;color:#0b3a63;white-space:nowrap;letter-spacing:0.658px;-webkit-text-stroke:0.400px #0b3a63;'>Paid</div>
<div style='position:absolute;top:966.37px;left:1510.25px;font-size:20px;line-height:1;font-weight:normal;color:#0b3a63;white-space:nowrap;letter-spacing:0.695px;-webkit-text-stroke:0.500px #0b3a63;'>Revenue Performance</div>
<div style='position:absolute;top:1028.15px;left:1527.00px;font-size:14px;line-height:1;font-weight:normal;color:#a4a4a4;white-space:nowrap;letter-spacing:-0.750px;'>INR</div>
<div style='position:absolute;top:1019.68px;left:1561.00px;font-size:24px;line-height:1;font-weight:normal;color:#0b3a63;white-space:nowrap;letter-spacing:-0.012px;'>28.75M</div>
<div style='position:absolute;top:1028.15px;left:1696.00px;font-size:14px;line-height:1;font-weight:normal;color:#a4a4a4;white-space:nowrap;letter-spacing:-1.000px;'>INR</div>
<div style='position:absolute;top:1019.58px;left:1730.40px;font-size:24px;line-height:1;font-weight:normal;color:#dc4b46;white-space:nowrap;letter-spacing:-0.145px;'>-11.85M</div>
</body></html>
